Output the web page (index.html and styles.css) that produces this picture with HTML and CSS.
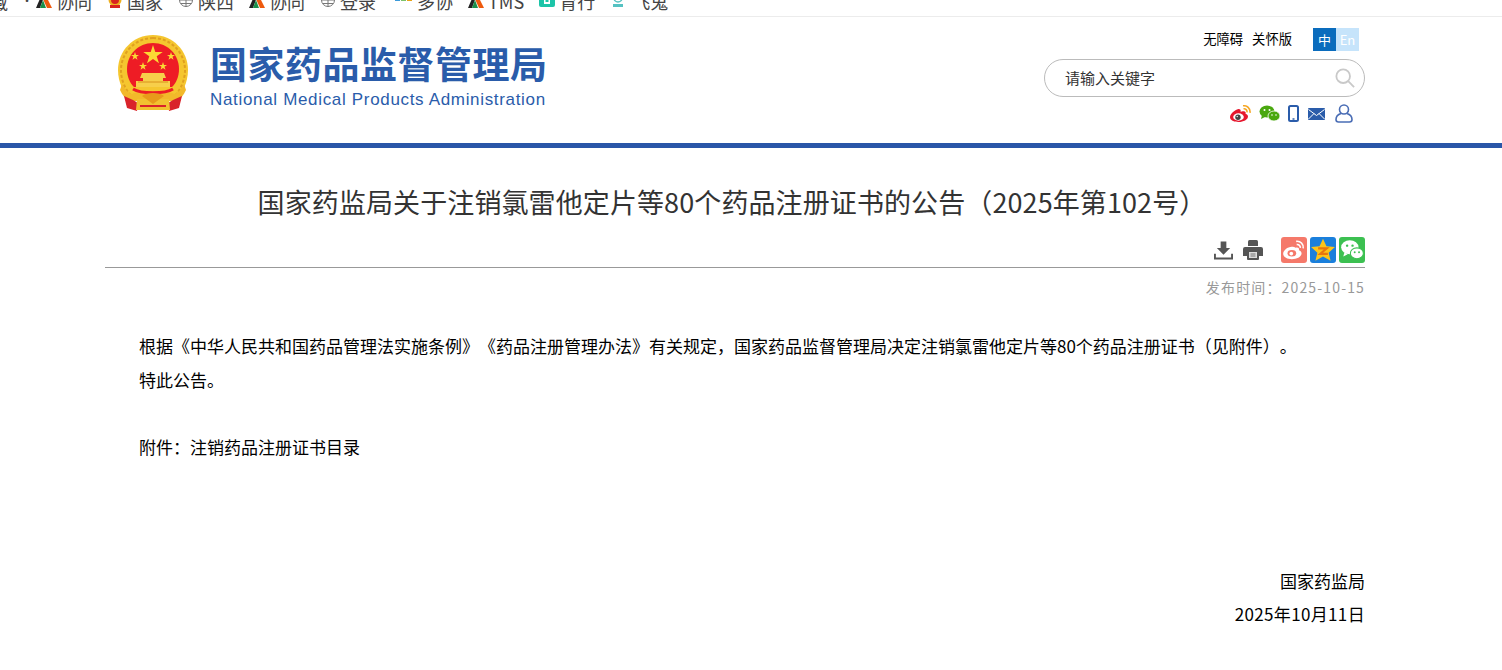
FILE: index.html
```html
<!DOCTYPE html>
<html lang="en">
<head>
  <meta charset="UTF-8">
  <title>国家药品监督管理局</title>
  <link rel="stylesheet" href="styles.css">
</head>
<body>
  <!-- Browser bookmarks strip, cut off at the top -->
  <div class="bookmarks">
    <div class="bookmarks-row">
      <span class="mark mark-first">藏</span>
      <span class="mark mark-dot">•</span>
      <span class="mark"><svg class="fav" viewBox="0 0 16 14"><path d="M0 14 6 0h3L4 14z" fill="#222"/><path d="M7 5 9 0l7 14h-5z" fill="#ee5a0e"/><path d="M4 14l3-8 3 8z" fill="#1a8f4a"/></svg>协同</span>
      <span class="mark"><svg class="fav" viewBox="0 0 16 14"><circle cx="8" cy="6" r="6.500" fill="#eeb020"/><circle cx="8" cy="6" r="4" fill="#d8231f"/><path d="M3 11h10v3H3z" fill="#d8231f"/></svg>国家</span>
      <span class="mark"><svg class="fav" viewBox="0 0 16 14" fill="none" stroke="#777"><circle cx="8" cy="6" r="6.500"/><path d="M1.500 6h13M8 0v13M3 2.500h10M3 9.500h10"/></svg>陕西</span>
      <span class="mark"><svg class="fav" viewBox="0 0 16 14"><path d="M0 14 6 0h3L4 14z" fill="#222"/><path d="M7 5 9 0l7 14h-5z" fill="#ee5a0e"/><path d="M4 14l3-8 3 8z" fill="#1a8f4a"/></svg>协同</span>
      <span class="mark mark-login"><svg class="fav" viewBox="0 0 16 14" fill="none" stroke="#777"><circle cx="8" cy="6" r="6.500"/><path d="M1.500 6h13M8 0v13M3 2.500h10M3 9.500h10"/></svg>登录</span>
      <span class="mark mark-wide"><svg class="fav fav-wide" viewBox="0 0 18 14"><path d="M0 4h5v3H0z" fill="#3b9ad9"/><path d="M6 4h5v3H6z" fill="#7cc36a"/><path d="M12 4h5v3h-5z" fill="#e8a317"/></svg>多协</span>
      <span class="mark"><svg class="fav" viewBox="0 0 16 14"><path d="M0 14 6 0h3L4 14z" fill="#222"/><path d="M7 5 9 0l7 14h-5z" fill="#ee5a0e"/><path d="M4 14l3-8 3 8z" fill="#1a8f4a"/></svg>TMS</span>
      <span class="mark"><svg class="fav" viewBox="0 0 16 14"><rect width="16" height="13" rx="2" fill="#1cc4a8"/><path d="M5 2h6v8H5z" fill="#fff"/><path d="M6.500 5h3v3h-3z" fill="#1cc4a8"/></svg>育行</span>
      <span class="mark mark-last"><svg class="fav" viewBox="0 0 16 14"><circle cx="8" cy="4" r="4" fill="none" stroke="#55c2c2" stroke-width="1.500"/><path d="M3 10h10v3H3z" fill="#55c2c2"/></svg>飞鬼</span>
    </div>
  </div>

  <div class="page">
    <!-- Header -->
    <div class="header">
      <div class="logo">
        <svg class="emblem" viewBox="0 0 70 78">
          <!-- wheat ring -->
          <path d="M35 1C15 1 0 17 0 36c0 13 6 24 14 31h42c8-7 14-18 14-31C70 17 55 1 35 1z" fill="#f5c62f"/>
          <path d="M35 4C17 4 3 19 3 36c0 11 5 21 12 28M35 4c18 0 32 15 32 32 0 11-5 21-12 28" fill="none" stroke="#e0a020" stroke-width="2" stroke-dasharray="3 2"/>
          <!-- red field -->
          <path d="M35 9C20 9 9 21 9 35c0 8 3 14 7 18h38c4-4 7-10 7-18C61 21 50 9 35 9z" fill="#ee1c25"/>
          <path d="M35 11l2.300 7h7.400l-6 4.300 2.300 7-6-4.300-6 4.300 2.300-7-6-4.300h7.400z" fill="#fbd934"/>
          <path d="M17 18l1 3h3l-2.500 1.800 1 3-2.500-1.800-2.500 1.800 1-3L13 21h3zM53 18l1 3h3l-2.500 1.800 1 3-2.500-1.800-2.500 1.800 1-3L49 21h3zM25 28l1 3h3l-2.500 1.800 1 3-2.500-1.800-2.500 1.800 1-3L21 31h3zM45 28l1 3h3l-2.500 1.800 1 3-2.500-1.800-2.500 1.800 1-3L41 31h3z" fill="#fbd934"/>
          <!-- gate -->
          <path d="M24 39h22l2 5h-3v3h7v6H18v-6h7v-3h-3z" fill="#f7cf4a"/>
          <path d="M20 48h30" stroke="#d8921a" stroke-width="1"/>
          <!-- swag and ribbons -->
          <path d="M4 50c2 5 6 9 10 10 6-4 36-4 42 0 4-1 8-5 10-10l2 6c-2 5-6 9-9 11H11c-3-2-7-6-9-11z" fill="#f2b92a"/>
          <path d="M15 55c8 5 32 5 40 0" fill="none" stroke="#ee1c25" stroke-width="3"/>
          <path d="M6 62l9 4 5 3-1 8-10-3zM64 62l-9 4-5 3 1 8 10-3z" fill="#d9232a"/>
          <path d="M19 65h32l1 11H18z" fill="#f2c230"/>
          <path d="M24 62c4-4 18-4 22 0l-11 8z" fill="#e89a1a"/>
          <path d="M22 71h26v2H22z" fill="#d9232a"/>
        </svg>
        <div class="logo-text">
          <div class="logo-cn">国家药品监督管理局</div>
          <div class="logo-en">National Medical Products Administration</div>
        </div>
      </div>
      <div class="tools">
        <div class="tools-top">
          <span class="tool-link">无障碍</span>
          <span class="tool-link">关怀版</span>
          <div class="lang">
            <span class="lang-cn">中</span><span class="lang-en">En</span>
          </div>
        </div>
        <div class="search">
          <span class="search-text">请输入关键字</span>
          <svg class="search-icon" viewBox="0 0 22 22" fill="none" stroke="#c9c9c9" stroke-width="2">
            <circle cx="9" cy="9" r="7.500"/>
            <path d="M14.500 14.500 21 21"/>
          </svg>
        </div>
        <div class="social">
          <svg class="icon-weibo" viewBox="0 0 21 17">
            <path d="M8.500 4C4.500 5 0 9 0 12.300 0 15.300 4 17 8.500 17c5 0 9.500-2.500 9.500-5.500 0-2-2-2.400-2.500-2.700.8-2-.7-3.300-4-2.200l-.8.300c.3-2.500-1-3-2.200-2.900z" fill="#e6162d"/>
            <ellipse cx="8.500" cy="12" rx="5.300" ry="3.700" fill="#fff"/>
            <circle cx="8" cy="12.200" r="2.700" fill="#444"/>
            <circle cx="7.200" cy="11.500" r=".7" fill="#fff"/>
            <path d="M13 .8c4-.5 7.500 2.500 7 7M13.500 3.800c2.200-.3 3.800 1.200 3.500 3.500" fill="none" stroke="#f5a623" stroke-width="1.600"/>
          </svg>
          <svg class="icon-wechat" viewBox="0 0 21 17">
            <ellipse cx="8" cy="6.500" rx="7.500" ry="6" fill="#4aa80f"/>
            <path d="M3 10l-1 4 4-2z" fill="#4aa80f"/>
            <ellipse cx="15" cy="11" rx="6" ry="5" fill="#4aa80f" stroke="#fff" stroke-width=".8"/>
            <circle cx="5.500" cy="5" r="1" fill="#fff"/><circle cx="10.500" cy="5" r="1" fill="#fff"/>
            <circle cx="13" cy="10" r=".8" fill="#fff"/><circle cx="17" cy="10" r=".8" fill="#fff"/>
          </svg>
          <svg class="icon-phone" viewBox="0 0 11 17">
            <rect x="1" y="1" width="9" height="15" rx="1.500" fill="#fff" stroke="#2a5caa" stroke-width="2"/>
            <path d="M4.500 14h2" stroke="#2a5caa" stroke-width="1.500"/>
          </svg>
          <svg class="icon-mail" viewBox="0 0 17 12">
            <rect width="17" height="12" rx="1" fill="#2a5caa"/>
            <path d="M.5 1.500 8.500 7.500l8-6M.5 11l5.500-5.500M16.500 11 11 5.500" fill="none" stroke="#fff"/>
          </svg>
          <svg class="icon-user" viewBox="0 0 18 19" fill="none" stroke="#4a6db5" stroke-width="1.600">
            <circle cx="9" cy="5.500" r="4.500"/>
            <path d="M6 9.500C3 10.500 1 13 1 15.500c0 1.500 1 2.500 2.500 2.500h11c1.500 0 2.500-1 2.500-2.500 0-2.500-2-5-5-6"/>
          </svg>
        </div>
      </div>
    </div>
  </div>
  <div class="blue-bar"></div>

  <!-- Article -->
  <div class="page">
    <h1 class="title">国家药监局关于注销氯雷他定片等80个药品注册证书的公告（2025年第102号）</h1>
    <div class="actions">
      <svg class="act-download" viewBox="0 0 20 20">
        <path d="M7 1h6v7h4l-7 7-7-7h4z" fill="#555"/>
        <path d="M1 14v5h18v-5" fill="none" stroke="#555" stroke-width="2"/>
      </svg>
      <svg class="act-print" viewBox="0 0 20 20">
        <path d="M5 1.500A1.500 1.500 0 0 1 6.500 0h7A1.500 1.500 0 0 1 15 1.500V6H5z" fill="#555"/>
        <path d="M2 7h16a2 2 0 0 1 2 2v7h-4v3a1 1 0 0 1-1 1H5a1 1 0 0 1-1-1v-3H0V9a2 2 0 0 1 2-2z" fill="#555"/>
        <path d="M6 12h8v6H6z" fill="#ddd"/>
        <path d="M7.500 14h5M7.500 16h5" stroke="#777"/>
      </svg>
      <div class="share share-weibo">
        <svg viewBox="0 0 24 24">
          <path d="M10 9c-4 0-8 3.500-8 6.500s4 5 8 5c5 0 9-2.500 9-5.500 0-2-2-2.500-2.500-2.800.5-1.700-.5-3-3-2.200C12.500 9.300 11.500 9 10 9z" fill="#fff"/>
          <ellipse cx="10" cy="15" rx="4" ry="3" fill="#f5796a"/>
          <circle cx="9.500" cy="15.300" r="1.700" fill="#fff"/>
          <path d="M14 4c4-.5 7 2.500 6.500 6.500M14.500 7c2-.3 3.500 1 3.300 3" fill="none" stroke="#fff" stroke-width="1.500"/>
        </svg>
      </div>
      <div class="share share-qzone">
        <svg viewBox="0 0 24 24">
          <path d="M12 1.500l3.200 7 7.800.8-5.800 5.200 1.800 7.500-7-4-7 4 1.800-7.500L1 9.300l7.800-.8z" fill="#fcc419"/>
          <path d="M7.500 10.500h8l-6 5h7" fill="none" stroke="#e8760c" stroke-width="2"/>
        </svg>
      </div>
      <div class="share share-wechat">
        <svg viewBox="0 0 24 24">
          <ellipse cx="10" cy="9.500" rx="8" ry="6.500" fill="#fff"/>
          <path d="M5 14l-1 4 4-2z" fill="#fff"/>
          <ellipse cx="16.500" cy="15" rx="6" ry="5" fill="#fff" stroke="#3cc051"/>
          <circle cx="7.500" cy="8" r="1.100" fill="#3cc051"/><circle cx="12.500" cy="8" r="1.100" fill="#3cc051"/>
          <circle cx="14.500" cy="14" r=".9" fill="#3cc051"/><circle cx="18.500" cy="14" r=".9" fill="#3cc051"/>
        </svg>
      </div>
    </div>
    <div class="publish-date">发布时间：2025-10-15</div>

    <div class="article">
      <p>根据《中华人民共和国药品管理法实施条例》《药品注册管理办法》有关规定，国家药品监督管理局决定注销氯雷他定片等80个药品注册证书（见附件）。</p>
      <p>特此公告。</p>
      <p class="blank">&nbsp;</p>
      <p>附件：注销药品注册证书目录</p>
      <p class="blank">&nbsp;</p>
      <p class="blank">&nbsp;</p>
      <p class="blank">&nbsp;</p>
      <p class="sign">国家药监局</p>
      <p class="sign sign-date">2025年10月11日</p>
    </div>
  </div>
</body>
</html>
```

FILE: styles.css
```css
body {
  margin: 0;
  background-color: #ffffff;
  color: #000000;
  font-family: "Noto Sans CJK SC", "Liberation Sans", sans-serif;
  text-spacing-trim: space-all;
  overflow: hidden;
}

/* Bookmarks strip */
.bookmarks {
  height: 16px;
  border-bottom: 1px solid #ececec;
  overflow: hidden;
}

.bookmarks-row {
  display: flex;
  align-items: center;
  height: 16px;
  margin-top: -7px;
  font-size: 18px;
  line-height: 20px;
  color: #444;
  white-space: nowrap;
}

.mark {
  display: flex;
  align-items: center;
  gap: 4px;
  margin-right: 15px;
}

.mark-first {
  margin-left: -10px;
  margin-right: 13px;
}

.mark-dot {
  margin-right: 3px;
  font-size: 12px;
}

.mark-login {
  margin-right: 19px;
}

.mark-last {
  gap: 6px;
}

.fav {
  width: 16px;
  height: 14px;
}

.fav-wide {
  width: 18px;
}

/* Header */
.page {
  width: 1260px;
  margin-left: 105px;
}

.header {
  display: flex;
  justify-content: space-between;
  height: 126px;
}

.logo {
  display: flex;
  margin-left: 13px;
  padding-top: 17px;
}

.emblem {
  width: 70px;
  height: 78px;
}

.logo-text {
  margin-left: 22px;
  padding-top: 7px;
}

.logo-cn {
  font-size: 37px;
  line-height: 44px;
  font-weight: 700;
  color: #2a5caa;
  letter-spacing: 0.5px;
  white-space: nowrap;
}

.logo-en {
  margin-top: 5px;
  font-family: "Liberation Sans", sans-serif;
  font-size: 17px;
  line-height: 20px;
  color: #2a5caa;
  letter-spacing: 0.67px;
  white-space: nowrap;
}

.tools {
  display: flex;
  flex-direction: column;
  align-items: flex-end;
  width: 321px;
  padding-top: 11px;
}

.tools-top {
  display: flex;
  align-items: center;
  height: 23px;
  padding-right: 6px;
  font-size: 13.300px;
}

.tool-link {
  margin-right: 9px;
  padding-bottom: 2px;
}

.lang {
  display: flex;
  margin-left: 12px;
  font-size: 13px;
  line-height: 23px;
  text-align: center;
}

.lang-cn {
  width: 23px;
  background-color: #0a6cbd;
  color: #fff;
}

.lang-en {
  width: 23px;
  background-color: #c6e4fb;
  color: #fff;
}

.search {
  display: flex;
  align-items: center;
  justify-content: space-between;
  box-sizing: border-box;
  width: 321px;
  height: 38px;
  margin-top: 8px;
  padding: 0 9px 0 20px;
  border: 1px solid #bbb;
  border-radius: 19px;
  font-size: 15px;
  color: #333;
}

.search-text {
  padding-bottom: 2px;
}

.search-icon {
  width: 20px;
  height: 20px;
}

.social {
  display: flex;
  align-items: center;
  margin-top: 7px;
  padding-right: 12px;
}

.icon-weibo {
  width: 21px;
  height: 17px;
}

.icon-wechat {
  width: 21px;
  height: 17px;
  margin-left: 8px;
}

.icon-phone {
  width: 11px;
  height: 17px;
  margin-left: 8px;
}

.icon-mail {
  width: 17px;
  height: 12px;
  margin-left: 9px;
}

.icon-user {
  width: 18px;
  height: 19px;
  margin-left: 10px;
}

.blue-bar {
  height: 5px;
  background-color: #2a56a8;
}

/* Article */
.title {
  margin: 0;
  padding: 36px 6px 0 0;
  font-size: 27px;
  line-height: 36px;
  font-weight: 400;
  letter-spacing: 0.1px;
  color: #333;
  text-align: center;
  white-space: nowrap;
}

.actions {
  display: flex;
  align-items: center;
  justify-content: flex-end;
  height: 26px;
  margin-top: 17px;
  padding-bottom: 4px;
  border-bottom: 1px solid #999;
}

.act-download {
  width: 19px;
  height: 20px;
}

.act-print {
  width: 20px;
  height: 20px;
  margin-left: 10px;
}

.share {
  width: 26px;
  height: 26px;
  margin-left: 3px;
  border-radius: 3px;
  line-height: 0;
}

.share svg {
  width: 26px;
  height: 26px;
}

.share-weibo {
  margin-left: 18px;
  background-color: #f5796a;
}

.share-qzone {
  background-color: #1a7fdc;
}

.share-wechat {
  background-color: #3cc051;
}

.publish-date {
  margin-top: 8px;
  font-size: 14px;
  line-height: 22px;
  color: #999;
  text-align: right;
  letter-spacing: 1.15px;
}

.article {
  margin-top: 31px;
  font-size: 17px;
  line-height: 33.500px;
  color: #000;
}

.article p {
  margin: 0;
  padding-left: 34px;
}

.article .sign {
  padding-left: 0;
  text-align: right;
}

.article .sign-date {
  letter-spacing: 0.35px;
}
```
